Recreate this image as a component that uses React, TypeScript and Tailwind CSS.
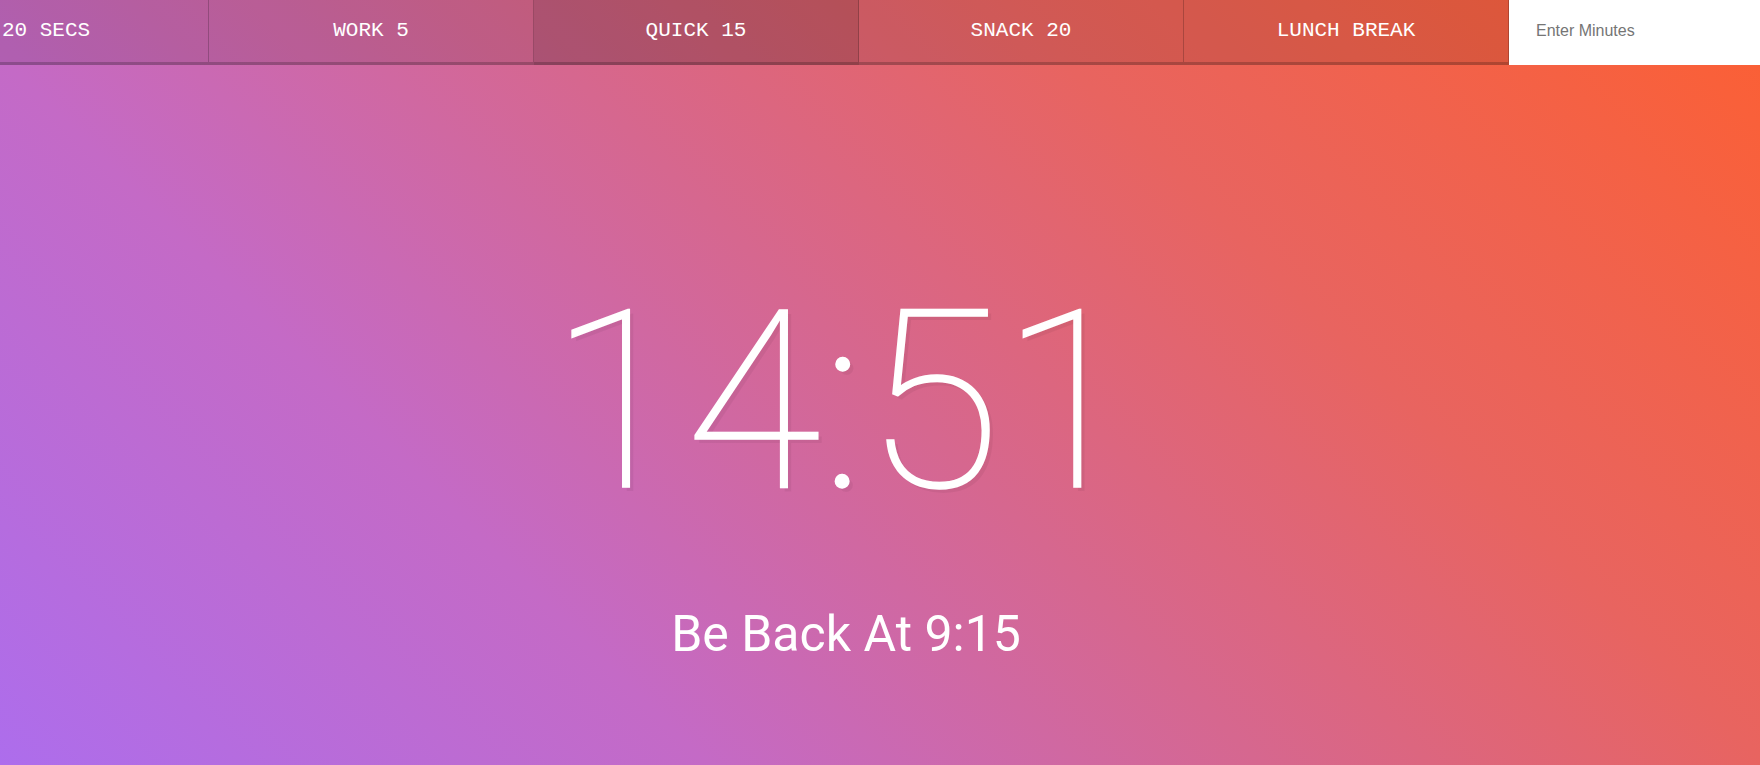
import React from 'react';

const buttons = [
  { label: '20 Secs', active: false },
  { label: 'Work 5', active: false },
  { label: 'Quick 15', active: true },
  { label: 'Snack 20', active: false },
  { label: 'Lunch Break', active: false },
];

export default function App() {
  return (
    <div className="h-screen w-full overflow-hidden bg-[linear-gradient(45deg,#ad6dec_0%,#c46ac6_28%,#d6678f_50%,#e86460_70%,#f9603a_95%,#fb5f33_100%)]">
      {/* page is scrolled sideways by 116px */}
      <div className="flex h-full w-[1950px] -ml-[116px] flex-col">
        <div className="flex h-[65px]">
          {buttons.map((b) => (
            <button
              key={b.label}
              className={`flex w-[325px] shrink-0 items-center justify-center border-r border-b-[3px] border-black/20 font-['Liberation_Mono',monospace] text-[21px] uppercase text-white ${
                b.active ? 'bg-black/20' : 'bg-black/10'
              }`}
            >
              {b.label}
            </button>
          ))}
          <form className="flex flex-1">
            <input
              type="text"
              placeholder="Enter Minutes"
              className="flex-1 bg-white pl-[27px] pb-[3px] font-['Liberation_Sans',Arial,sans-serif] text-[16px] text-gray-800 outline-none placeholder:text-[#757575]"
            />
          </form>
        </div>

        <div className="flex flex-1 flex-col items-center pt-[214px] pr-[26px] text-white">
          <h1 className="m-0 mr-[6px] font-['Roboto',sans-serif] text-[248px] font-thin leading-none [-webkit-text-stroke:1.5px_white] [text-shadow:4px_4px_0_rgba(0,0,0,0.05)]">
            14:51
          </h1>
          <p className="mt-[82px] font-['Roboto',sans-serif] text-[50px] leading-none">
            Be Back At 9:15
          </p>
        </div>
      </div>
    </div>
  );
}
